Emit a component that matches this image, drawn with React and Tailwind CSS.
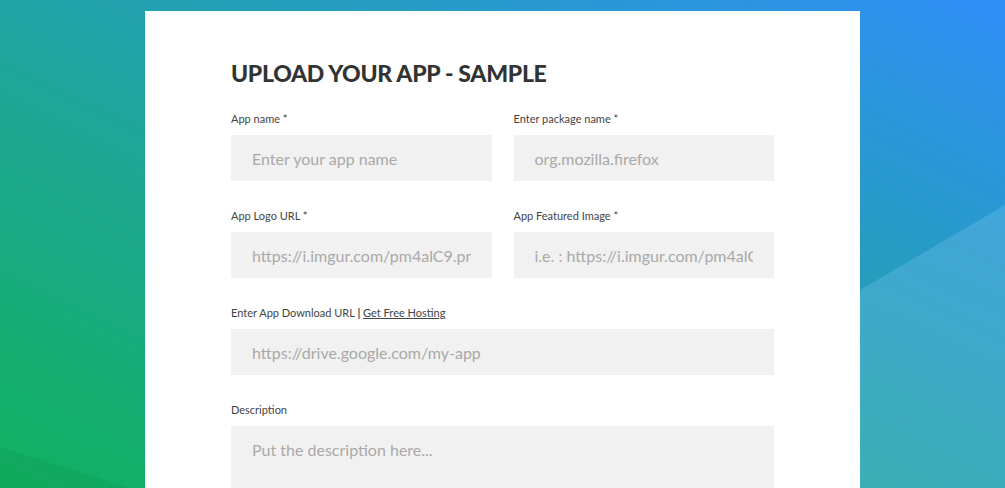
import { useState } from "react";

/* ----------------- Background ----------------- */

function Backdrop() {
  return (
    <svg
      className="pointer-events-none absolute inset-0 h-full w-full"
      viewBox="0 0 1005 488"
      preserveAspectRatio="none"
    >
      <defs>
        <linearGradient id="bgGrad" x1="0" y1="1" x2="1" y2="0">
          <stop offset="0" stopColor="#10b25e" />
          <stop offset="0.45" stopColor="#1fa59c" />
          <stop offset="1" stopColor="#2f8ff8" />
        </linearGradient>
      </defs>
      <rect width="1005" height="488" fill="url(#bgGrad)" />
      {/* soft light wedge on the right */}
      <polygon points="1005,205 860,290 860,488 1005,488" fill="#6fc0e8" fillOpacity="0.35" />
      {/* darker wedge bottom left */}
      <polygon points="0,447 0,488 130,488" fill="#0f9a55" fillOpacity="0.35" />
    </svg>
  );
}

function Field({ label, placeholder, children }) {
  return (
    <div className="flex flex-col">
      <label className="mb-[9px] text-[11px] leading-[14px] text-[#444]">{children || label}</label>
      <input
        placeholder={placeholder}
        className="h-[46px] w-full bg-[#f1f1f1] px-[21px] text-[16px] text-[#444] outline-none placeholder:text-[#a9a9a9]"
      />
    </div>
  );
}

export default function App() {
  const [desc, setDesc] = useState("");

  return (
    <div
      className="relative h-[488px] w-full overflow-hidden"
      style={{ fontFamily: "Lato, 'Open Sans', sans-serif" }}
    >
      <Backdrop />

      <div className="relative z-10 mx-auto mt-[11px] w-[715px] bg-white px-[86px] pt-[50px] pb-10 min-h-[500px]">
        <h1 className="mb-[27px] text-[23px] font-black leading-[24px] tracking-[-0.3px] text-[#333]">
          UPLOAD YOUR APP - SAMPLE
        </h1>

        <div className="grid grid-cols-2 gap-x-[22px] gap-y-[28px]">
          <Field label="App name *" placeholder="Enter your app name" />
          <Field label="Enter package name *" placeholder="org.mozilla.firefox" />
          <Field label="App Logo URL *" placeholder="https://i.imgur.com/pm4alC9.png" />
          <Field label="App Featured Image *" placeholder="i.e. : https://i.imgur.com/pm4alC9.png" />

          <div className="col-span-2">
            <Field placeholder="https://drive.google.com/my-app">
              Enter App Download URL <span className="font-bold">|</span>{" "}
              <a href="#" className="underline">Get Free Hosting</a>
            </Field>
          </div>

          <div className="col-span-2 flex flex-col">
            <label className="mb-[9px] text-[11px] leading-[14px] text-[#444]">Description</label>
            <textarea
              value={desc}
              onChange={(e) => setDesc(e.target.value)}
              placeholder="Put the description here..."
              className="h-[120px] w-full resize-none bg-[#f1f1f1] px-[21px] py-[12px] text-[16px] text-[#444] outline-none placeholder:text-[#a9a9a9]"
            />
          </div>
        </div>
      </div>
    </div>
  );
}
